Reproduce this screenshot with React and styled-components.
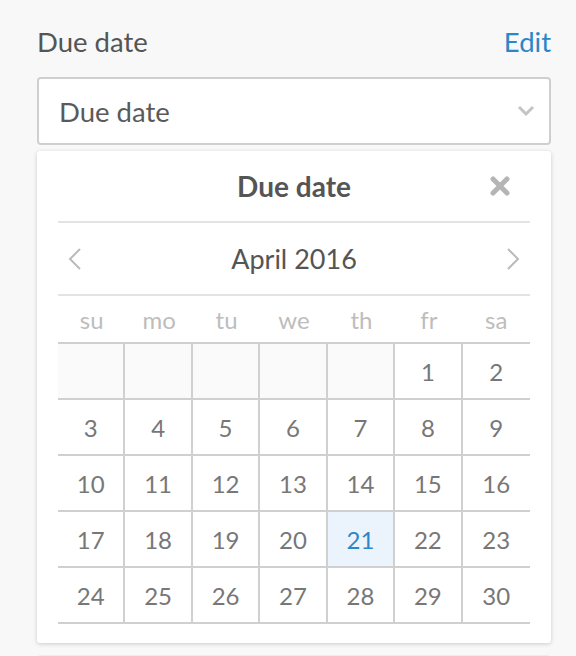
import React from "react";
import styled, { createGlobalStyle } from "styled-components";

const Global = createGlobalStyle`
  html, body {
    margin: 0;
    padding: 0;
    background: #f8f8f8;
    font-family: "Lato", "Liberation Sans", sans-serif;
  }
`;

const Page = styled.div`
  width: 576px;
  height: 656px;
  overflow: hidden;
  box-sizing: border-box;
  padding: 23px 25px 0 37px;
`;

const LabelRow = styled.div`
  display: flex;
  justify-content: space-between;
  align-items: baseline;
  font-size: 27.5px;
  line-height: 38px;
  color: #555;
`;

const EditLink = styled.a`
  color: #2a87c8;
  text-decoration: none;
  cursor: pointer;
`;

const Select = styled.div`
  margin-top: 16px;
  height: 68px;
  box-sizing: border-box;
  border: 2px solid #cfcfcf;
  border-radius: 4px;
  background: #fff;
  display: flex;
  align-items: center;
  justify-content: space-between;
  padding: 0 14px 0 20px;
  font-size: 27.5px;
  color: #5a5a5a;
`;

const Popup = styled.div`
  margin-top: 6px;
  background: #fff;
  border-radius: 3px;
  box-shadow: 0 1px 4px rgba(0, 0, 0, 0.18);
  padding: 0 21px 19px 21px;
`;

const Header = styled.div`
  position: relative;
  height: 70px;
  display: flex;
  align-items: center;
  justify-content: center;
  border-bottom: 2px solid #e3e3e3;
  font-size: 28px;
  font-weight: bold;
  color: #555;
`;

const Close = styled.span`
  position: absolute;
  right: 20px;
  top: 25px;
  display: flex;
`;

const MonthNav = styled.div`
  height: 71px;
  display: flex;
  align-items: center;
  justify-content: space-between;
  border-bottom: 2px solid #e3e3e3;
  padding: 0 10px;
  font-size: 27px;
  color: #555;
`;

const Arrow = styled.span`
  display: flex;
  cursor: pointer;
`;

const Grid = styled.div`
  display: grid;
  grid-template-columns: repeat(7, 1fr);
`;

const WeekDay = styled.div`
  height: 46px;
  display: flex;
  align-items: center;
  justify-content: center;
  font-size: 24px;
  color: #bdbdbd;
  border-bottom: 2px solid #d0d0d0;
`;

const Day = styled.div`
  height: 56px;
  box-sizing: border-box;
  display: flex;
  align-items: center;
  justify-content: center;
  font-size: 24px;
  color: ${(p) => (p.today ? "#2a87c8" : "#777")};
  background: ${(p) => (p.today ? "#ebf3fd" : p.empty ? "#fafafa" : "#fff")};
  border-bottom: 2px solid #d0d0d0;
  border-right: ${(p) => (p.last ? "none" : "2px solid #d0d0d0")};
`;

const Below = styled.div`
  margin-top: 12px;
  height: 20px;
  border: 2px solid #ececec;
  border-bottom: none;
  border-radius: 4px 4px 0 0;
  background: #f8f8f8;
`;

const days = ["su", "mo", "tu", "we", "th", "fr", "sa"];

function Chevron() {
  return (
    <svg width="18" height="12" viewBox="0 0 18 12">
      <path d="M2 2 L9 9 L16 2" stroke="#c4c4c4" strokeWidth="3" fill="none" />
    </svg>
  );
}

export default function App() {
  const cells = [];
  for (let i = 0; i < 5; i++) cells.push(null);
  for (let d = 1; d <= 30; d++) cells.push(d);

  return (
    <Page>
      <Global />
      <LabelRow>
        <span>Due date</span>
        <EditLink>Edit</EditLink>
      </LabelRow>
      <Select>
        <span>Due date</span>
        <Chevron />
      </Select>
      <Popup>
        <Header>
          Due date
          <Close>
            <svg width="20" height="20" viewBox="0 0 20 20">
              <path d="M3 3 L17 17 M17 3 L3 17" stroke="#b5b5b5" strokeWidth="5" strokeLinecap="round" />
            </svg>
          </Close>
        </Header>
        <MonthNav>
          <Arrow>
            <svg width="14" height="24" viewBox="0 0 14 24">
              <path d="M12 2 L2 12 L12 22" stroke="#bbb" strokeWidth="2" fill="none" />
            </svg>
          </Arrow>
          <span>April 2016</span>
          <Arrow>
            <svg width="14" height="24" viewBox="0 0 14 24">
              <path d="M2 2 L12 12 L2 22" stroke="#bbb" strokeWidth="2" fill="none" />
            </svg>
          </Arrow>
        </MonthNav>
        <Grid>
          {days.map((d) => (
            <WeekDay key={d}>{d}</WeekDay>
          ))}
          {cells.map((d, i) => (
            <Day key={i} empty={d === null} today={d === 21} last={i % 7 === 6}>
              {d}
            </Day>
          ))}
        </Grid>
      </Popup>
      <Below />
    </Page>
  );
}
